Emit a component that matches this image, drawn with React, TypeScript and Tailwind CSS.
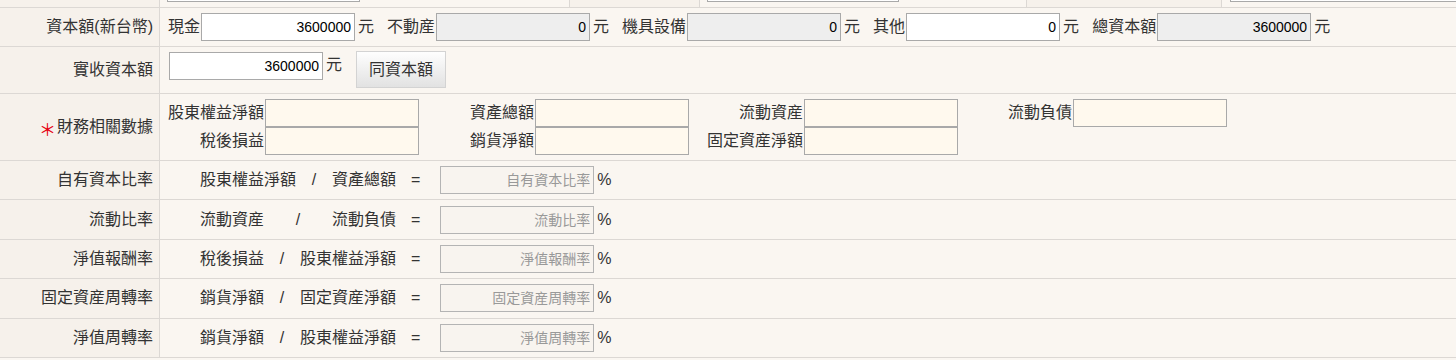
import React from "react";

// 共用樣式
const FONT = "font-['Liberation_Sans','Noto_Sans_CJK_TC',sans-serif]";
const LINE = "border-[#dcd8d4]";

type RowProps = {
  label?: React.ReactNode;
  required?: boolean;
  children?: React.ReactNode;
  contentClass?: string;
};

function Row({ label, required, children, contentClass = "" }: RowProps) {
  return (
    <div className={`flex border-b ${LINE}`}>
      <div
        className={`w-[160px] shrink-0 bg-[#f6f1eb] border-r ${LINE} flex items-center justify-end pr-[6px] text-[16px] text-[#333]`}
      >
        {required && (
          <span className="text-[#e60012] text-[17px] font-['Noto_Sans_CJK_TC',sans-serif] leading-none mr-[1px] mt-[3px]">
            ＊
          </span>
        )}
        {label}
      </div>
      <div className={`flex-1 flex ${contentClass}`}>{children}</div>
    </div>
  );
}

function NumInput({
  value,
  tone = "white",
}: {
  value: string;
  tone?: "white" | "gray";
}) {
  return (
    <input
      readOnly
      defaultValue={value}
      className={`w-[154px] h-[28px] border border-[#a9a9a9] text-right pr-[3px] text-[14px] text-black outline-none ${FONT} ${
        tone === "gray" ? "bg-[#eeeeee]" : "bg-white"
      }`}
    />
  );
}

function CreamInput() {
  return (
    <input
      className={`w-[154px] h-[28px] border border-[#a9a9a9] bg-[#fff9ee] text-[14px] outline-none ${FONT}`}
    />
  );
}

function CapitalGroup({
  label,
  value,
  tone,
}: {
  label: string;
  value: string;
  tone?: "white" | "gray";
}) {
  return (
    <div className="flex items-center">
      <span>{label}</span>
      <span className="ml-[1px]">
        <NumInput value={value} tone={tone} />
      </span>
      <span className="ml-[3px]">元</span>
    </div>
  );
}

const financeCols = [
  ["股東權益淨額", "稅後損益"],
  ["資產總額", "銷貨淨額"],
  ["流動資産", "固定資産淨額"],
  ["流動負債", ""],
];

const ratioRows = [
  { label: "自有資本比率", a: "股東權益淨額", b: "資產總額", ph: "自有資本比率" },
  { label: "流動比率", a: "流動資産", b: "流動負債", ph: "流動比率" },
  { label: "淨值報酬率", a: "稅後損益", b: "股東權益淨額", ph: "淨值報酬率" },
  { label: "固定資産周轉率", a: "銷貨淨額", b: "固定資産淨額", ph: "固定資産周轉率" },
  { label: "淨值周轉率", a: "銷貨淨額", b: "股東權益淨額", ph: "淨值周轉率" },
];

export default function App() {
  return (
    <div className={`w-[1456px] h-[360px] overflow-hidden bg-[#faf6f1] text-[#333] text-[16px] ${FONT}`}>
      {/* 上一列（只露出底部） */}
      <div className={`flex h-[8px] overflow-hidden border-b ${LINE}`}>
        <div className={`w-[160px] shrink-0 bg-[#f6f1eb] border-r ${LINE}`} />
        <div className="w-[409px] shrink-0 flex items-end pl-[7px]">
          <div className="w-[193px] h-[28px] mb-[5px] border border-[#a9a9a9] bg-white shrink-0" />
        </div>
        <div className={`w-[131px] shrink-0 bg-[#f6f1eb] border-x ${LINE}`} />
        <div className="w-[326px] shrink-0 flex items-end pl-[7px]">
          <div className="w-[192px] h-[28px] mb-[5px] border border-[#a9a9a9] bg-white shrink-0" />
        </div>
        <div className={`w-[196px] shrink-0 bg-[#f6f1eb] border-x ${LINE}`} />
        <div className="flex-1 flex items-end pl-[8px]">
          <div className="w-[240px] h-[28px] mb-[5px] border border-[#a9a9a9] bg-white shrink-0" />
        </div>
      </div>

      {/* 資本額 */}
      <Row label="資本額(新台幣)" contentClass="h-[38px] items-center pl-[8px] gap-[13px]">
        <CapitalGroup label="現金" value="3600000" />
        <CapitalGroup label="不動産" value="0" tone="gray" />
        <CapitalGroup label="機具設備" value="0" tone="gray" />
        <CapitalGroup label="其他" value="0" />
        <CapitalGroup label="總資本額" value="3600000" tone="gray" />
      </Row>

      {/* 實收資本額 */}
      <Row label="實收資本額" contentClass="h-[46px] items-start pt-[4px] pl-[9px]">
        <div className="mt-[1px]">
          <NumInput value="3600000" />
        </div>
        <span className="ml-[3px] mt-[1px] h-[28px] leading-[26px]">元</span>
        <button
          className={`ml-[14px] w-[90px] h-[37px] border border-[#d3d3d3] bg-gradient-to-b from-[#fefefe] to-[#e2e2e2] text-[16px] text-[#333] ${FONT}`}
        >
          同資本額
        </button>
      </Row>

      {/* 財務相關數據 */}
      <Row label="財務相關數據" required contentClass="h-[66px] items-center">
        <div className="grid grid-cols-[105px_154px_116px_154px_115px_154px_115px_154px] grid-rows-[28px_28px]">
          {[0, 1].map((r) =>
            financeCols.map((col, c) => (
              <React.Fragment key={`${r}-${c}`}>
                <div className="flex items-center justify-end pr-[1px]">{col[r]}</div>
                <div>{col[r] ? <CreamInput /> : null}</div>
              </React.Fragment>
            ))
          )}
        </div>
      </Row>

      {/* 比率 */}
      {ratioRows.map((row) => (
        <Row key={row.label} label={row.label} contentClass="h-[38.4px] items-center pl-[40px]">
          <div className="w-[196px] flex justify-between">
            <span>{row.a}</span>
            <span>/</span>
            <span>{row.b}</span>
          </div>
          <span className="ml-[15px]">=</span>
          <input
            readOnly
            placeholder={row.ph}
            className={`ml-[20px] w-[154px] h-[28px] border border-[#b4b4b4] bg-[#f8f4ef] text-right pr-[3px] text-[14px] placeholder:text-[#999] outline-none ${FONT}`}
          />
          <span className="ml-[3px]">%</span>
        </Row>
      ))}
    </div>
  );
}
